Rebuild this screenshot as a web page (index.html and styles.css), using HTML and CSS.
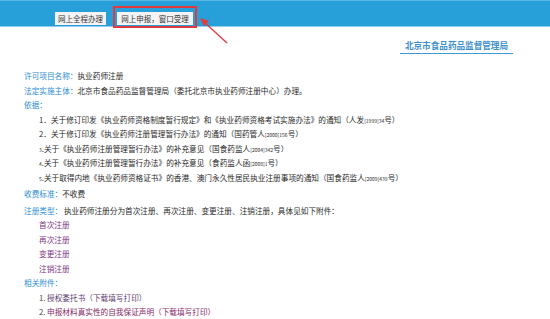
FILE: index.html
```html
<!DOCTYPE html>
<html lang="zh-CN">
<head>
<meta charset="utf-8">
<link rel="stylesheet" href="styles.css">
</head>
<body>
<div class="topbar">
  <span class="tab">网上全程办理</span>
  <span class="tab tab-wide">网上申报，窗口受理</span>
  <div class="highlight"></div>
  <svg class="arrow" width="40" height="40" viewBox="0 0 40 40">
    <line x1="30" y1="26" x2="6" y2="4" stroke="#e5393b" stroke-width="1.3"/>
    <polygon points="3,1 12,4 7,9" fill="#e5393b"/>
  </svg>
</div>
<div class="titlewrap">
  <div class="title">北京市食品药品监督管理局</div>
</div>
<div class="content">
  <div class="row"><span class="label">许可项目名称：</span>执业药师注册</div>
  <div class="row"><span class="label">法定实施主体：</span>北京市食品药品监督管理局（委托北京市执业药师注册中心）办理。</div>
  <div class="row"><span class="label">依据：</span></div>
  <div class="row indent">1．关于修订印发《执业药师资格制度暂行规定》和《执业药师资格考试实施办法》的通知（人发<small>[1999]34</small>号）</div>
  <div class="row indent">2．关于修订印发《执业药师注册管理暂行办法》的通知（国药管人<small>[2000]156</small>号）</div>
  <div class="row indent"><small>3</small>.关于《执业药师注册管理暂行办法》的补充意见（国食药监人<small>[2004]342</small>号）</div>
  <div class="row indent"><small>4</small>.关于《执业药师注册管理暂行办法》的补充意见（食药监人函<small>[2008]1</small>号）</div>
  <div class="row indent"><small>5</small>.关于取得内地《执业药师资格证书》的香港、澳门永久性居民执业注册事项的通知（国食药监人<small>[2009]439</small>号）</div>
  <div class="row gap1"><span class="label">收费标准：</span>不收费</div>
  <div class="row gap2"><span class="label">注册类型：</span> 执业药师注册分为首次注册、再次注册、变更注册、注销注册，具体见如下附件：</div>
  <div class="row indent link">首次注册</div>
  <div class="row indent link">再次注册</div>
  <div class="row indent link">变更注册</div>
  <div class="row indent link">注销注册</div>
  <div class="row"><span class="label">相关附件：</span></div>
  <div class="row indent"><span class="num">1.</span> <span class="att1">授权委托书（下载填写打印）</span></div>
  <div class="row indent"><span class="num">2.</span> <span class="att2">申报材料真实性的自我保证声明（下载填写打印）</span></div>
</div>
</body>
</html>
```
FILE: styles.css
```css
html, body {
  margin: 0;
  padding: 0;
  background: #fff;
  font-family: "Noto Sans CJK SC", "Noto Sans", sans-serif;
  color: #2a2a2a;
}
.topbar {
  position: relative;
  height: 27px;
  background: #279fd9;
  border-top: 1px solid #5bb7e4;
  box-sizing: border-box;
  border-bottom: 1px solid #8fcdee;
  display: flex;
  align-items: flex-start;
  padding-left: 55px;
  padding-top: 11px;
  gap: 11px;
}
.tab {
  display: flex;
  align-items: center;
  justify-content: center;
  width: 51px;
  height: 13px;
  background: #f3f3f3;
  font-size: 7.5px;
  color: #333;
  white-space: nowrap;
}
.tab-wide {
  width: 76px;
}
.highlight {
  position: absolute;
  left: 113px;
  top: 5px;
  width: 84px;
  height: 22px;
  box-sizing: border-box;
  border: 2px solid #e3393c;
}
.arrow {
  position: absolute;
  left: 197px;
  top: 16px;
  overflow: visible;
}
.titlewrap {
  display: flex;
  justify-content: flex-end;
  padding-right: 37px;
  padding-top: 12px;
}
.title {
  width: 113px;
  text-align: center;
  font-size: 8.6px;
  font-weight: bold;
  color: #3d8fcc;
  line-height: 12px;
  padding-bottom: 2px;
  border-bottom: 1.5px solid #3a9bd8;
}
.content {
  padding-left: 24px;
  padding-top: 15px;
  font-size: 7.65px;
}
.row {
  height: 14.5px;
  line-height: 14.5px;
  white-space: nowrap;
}
.label {
  color: #2a8dd4;
}
.indent {
  padding-left: 15px;
}
.gap1 {
  margin-top: 1.5px;
}
.gap2 {
  margin-top: 2.5px;
}
.link {
  color: #7d3585;
}
.num {
  color: #444;
}
.att1 {
  color: #5c3c6c;
}
.att2 {
  color: #862765;
}
small {
  font-size: 5px;
}
```
